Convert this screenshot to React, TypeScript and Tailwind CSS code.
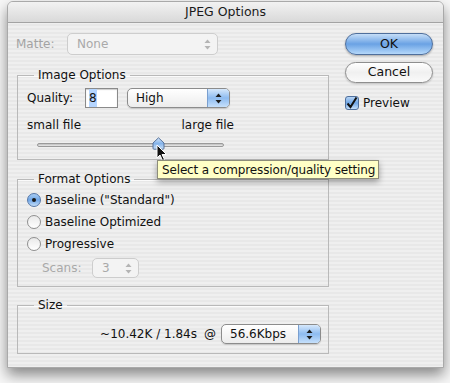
import React from 'react';

const FONT = 'font-["DejaVu_Sans",_"Liberation_Sans",_sans-serif]';

function Arrows({ disabled }: { disabled?: boolean }) {
  const c = disabled ? '#b4b4b4' : '#1d1d1d';
  return (
    <svg width="7" height="11" viewBox="0 0 7 11">
      <path d="M3.5 0.5 L6.5 4 L0.5 4 Z" fill={c} />
      <path d="M3.5 10.5 L6.5 7 L0.5 7 Z" fill={c} />
    </svg>
  );
}

function Popup({
  label,
  className,
  disabled,
}: {
  label: string;
  className: string;
  disabled?: boolean;
}) {
  if (disabled) {
    return (
      <div
        className={`flex items-center rounded-[5px] border border-[#cdcdcd] bg-[#f3f3f3] text-[#a9a9a9] ${className}`}
      >
        <span className="flex-1 pl-[9px]">{label}</span>
        <span className="flex w-[20px] justify-center">
          <Arrows disabled />
        </span>
      </div>
    );
  }
  return (
    <div
      className={`flex items-stretch overflow-hidden rounded-[5px] border border-[#8c8c8c] bg-gradient-to-b from-white to-[#ececec] text-[#111] shadow-[0_1px_1px_rgba(0,0,0,0.15)] ${className}`}
    >
      <span className="flex flex-1 items-center pl-[8px]">{label}</span>
      <span className="flex w-[22px] items-center justify-center border-l border-[#7a9fcf] bg-gradient-to-b from-[#d6e8fb] via-[#8dbbf0] to-[#c6e0fb]">
        <Arrows />
      </span>
    </div>
  );
}

function Radio({ checked, label }: { checked?: boolean; label: string }) {
  return (
    <div className="flex h-[22px] items-center">
      {checked ? (
        <span className="flex h-[14px] w-[14px] items-center justify-center rounded-full border border-[#5577a8] bg-gradient-to-b from-[#a9cdf3] via-[#6ea5e6] to-[#c3ddf8]">
          <span className="h-[4px] w-[4px] rounded-full bg-[#1a1a1a]" />
        </span>
      ) : (
        <span className="h-[14px] w-[14px] rounded-full border border-[#8f8f8f] bg-gradient-to-b from-[#e9e9e9] to-white" />
      )}
      <span className="ml-[4px] text-[#111]">{label}</span>
    </div>
  );
}

function Group({
  title,
  className,
  children,
}: {
  title: string;
  className?: string;
  children: React.ReactNode;
}) {
  return (
    <fieldset
      className={`ml-[9px] w-[312px] border border-[#b9b9b9] shadow-[inset_0_1px_0_rgba(255,255,255,0.8)] ${className ?? ''}`}
    >
      <legend className="ml-[16px] px-[4px] leading-[16px] text-[#111]">{title}</legend>
      {children}
    </fieldset>
  );
}

export default function App() {
  return (
    <div className={`relative h-[383px] w-[450px] overflow-hidden bg-[#f7f7f7] text-[12px] ${FONT}`}>
      {/* window */}
      <div className="ml-[7px] mt-[1px] h-[367px] w-[437px] overflow-hidden rounded-t-[6px] border border-[#a9a9a9] bg-[#ececec] bg-[repeating-linear-gradient(to_bottom,#efefef_0px,#efefef_2px,#e8e8e8_2px,#e8e8e8_4px)] shadow-[0_7px_14px_rgba(0,0,0,0.45)]">
        {/* title bar */}
        <div className="flex h-[21px] items-center justify-center border-b border-[#a3a3a3] bg-gradient-to-b from-[#f2f2f2] to-[#d9d9d9] text-[12.5px] text-[#1a1a1a]">
          JPEG Options
        </div>

        <div className="flex">
          {/* left column */}
          <div className="w-[336px]">
            <div className="ml-[8px] mt-[10px] flex h-[22px] items-center">
              <span className="w-[51px] text-[#a3a3a3]">Matte:</span>
              <Popup label="None" disabled className="h-[22px] w-[151px]" />
            </div>

            <Group title="Image Options" className="mt-[12px] pb-[7px]">
              <div className="ml-[9px] mt-[5px] flex h-[20px] items-center">
                <span className="w-[58px] text-[#111]">Quality:</span>
                <div className="flex h-[20px] w-[33px] items-center border border-[#8a8a8a] bg-white pl-[3px] shadow-[inset_0_1px_1px_rgba(0,0,0,0.2)]">
                  <span className="bg-[#b5d5ff] text-[#111]">8</span>
                </div>
                <Popup label="High" className="ml-[9px] h-[20px] w-[103px]" />
              </div>
              <div className="ml-[9px] mr-[94px] mt-[9px] flex h-[16px] items-center justify-between text-[#111]">
                <span>small file</span>
                <span>large file</span>
              </div>
              <div className="ml-[19px] mt-[5px] flex h-[14px] w-[187px] items-center">
                <div className="relative h-[4px] w-full rounded-full border border-[#9a9a9a] bg-gradient-to-b from-[#bdbdbd] to-[#eaeaea]">
                  <svg
                    className="absolute left-[114px] top-[-7px]"
                    width="13"
                    height="13"
                    viewBox="0 0 13 13"
                  >
                    <defs>
                      <linearGradient id="th" x1="0" y1="0" x2="0" y2="1">
                        <stop offset="0" stopColor="#d4e6fa" />
                        <stop offset="0.5" stopColor="#86b4ea" />
                        <stop offset="1" stopColor="#c9e0f9" />
                      </linearGradient>
                    </defs>
                    <path
                      d="M6.5 0.8 L12 6 L12 11.2 Q12 12.2 11 12.2 L2 12.2 Q1 12.2 1 11.2 L1 6 Z"
                      fill="url(#th)"
                      stroke="#58739a"
                      strokeWidth="1"
                    />
                  </svg>
                </div>
              </div>
            </Group>

            <Group title="Format Options" className="mt-[11px] pb-[8px]">
              <div className="ml-[9px] mt-[2px]">
                <Radio checked label={'Baseline ("Standard")'} />
                <Radio label="Baseline Optimized" />
                <Radio label="Progressive" />
                <div className="ml-[15px] mt-[3px] flex h-[20px] items-center">
                  <span className="w-[50px] text-[#a9a9a9]">Scans:</span>
                  <Popup label="3" disabled className="h-[20px] w-[47px]" />
                </div>
              </div>
            </Group>

            <Group title="Size" className="mt-[10px] pb-[9px]">
              <div className="mr-[7px] mt-[11px] flex h-[20px] items-center justify-end text-[#111]">
                <span>~10.42K / 1.84s</span>
                <span className="ml-[7px] mr-[5px]">@</span>
                <Popup label="56.6Kbps" className="h-[20px] w-[100px]" />
              </div>
            </Group>
          </div>

          {/* right column */}
          <div className="ml-[1px] w-[88px] text-[#111]">
            <div className="mt-[10px] flex h-[22px] items-center justify-center rounded-full border border-[#4f6f9c] bg-gradient-to-b from-[#c6def7] via-[#6aa2e4] to-[#b5d8fa] text-[12.5px] shadow-[0_1px_2px_rgba(0,0,0,0.3)]">
              OK
            </div>
            <div className="mt-[7px] flex h-[21px] items-center justify-center rounded-full border border-[#8e8e8e] bg-gradient-to-b from-white via-[#f0f0f0] to-[#fafafa] text-[12.5px] shadow-[0_1px_2px_rgba(0,0,0,0.2)]">
              Cancel
            </div>
            <div className="mt-[12px] flex h-[16px] items-center">
              <span className="flex h-[14px] w-[14px] items-center justify-center rounded-[3px] border border-[#4f6f9c] bg-gradient-to-b from-[#b7d5f5] via-[#6fa5e5] to-[#c4def9]">
                <svg width="12" height="12" viewBox="0 0 12 12">
                  <path
                    d="M1.5 6.5 L4.5 10 L10.5 0.5"
                    fill="none"
                    stroke="#111"
                    strokeWidth="2"
                  />
                </svg>
              </span>
              <span className="ml-[4px]">Preview</span>
            </div>
          </div>
        </div>
      </div>

      {/* mouse cursor */}
      <svg className="absolute left-[156px] top-[144px]" width="12" height="18" viewBox="0 0 12 18">
        <path
          d="M1 1 L1 14 L4 11 L6.5 16.5 L8.5 15.5 L6 10.5 L10.5 10.5 Z"
          fill="#111"
          stroke="#fff"
          strokeWidth="1"
        />
      </svg>

      {/* tooltip */}
      <div className="absolute left-[157px] top-[160px] flex h-[19px] w-[222px] items-center whitespace-nowrap border border-[#8d8d7a] bg-[#ffffc6] pl-[4px] text-[12px] tracking-[-0.15px] text-[#111] shadow-[0_3px_6px_rgba(0,0,0,0.35)]">
        Select a compression/quality setting
      </div>
    </div>
  );
}
